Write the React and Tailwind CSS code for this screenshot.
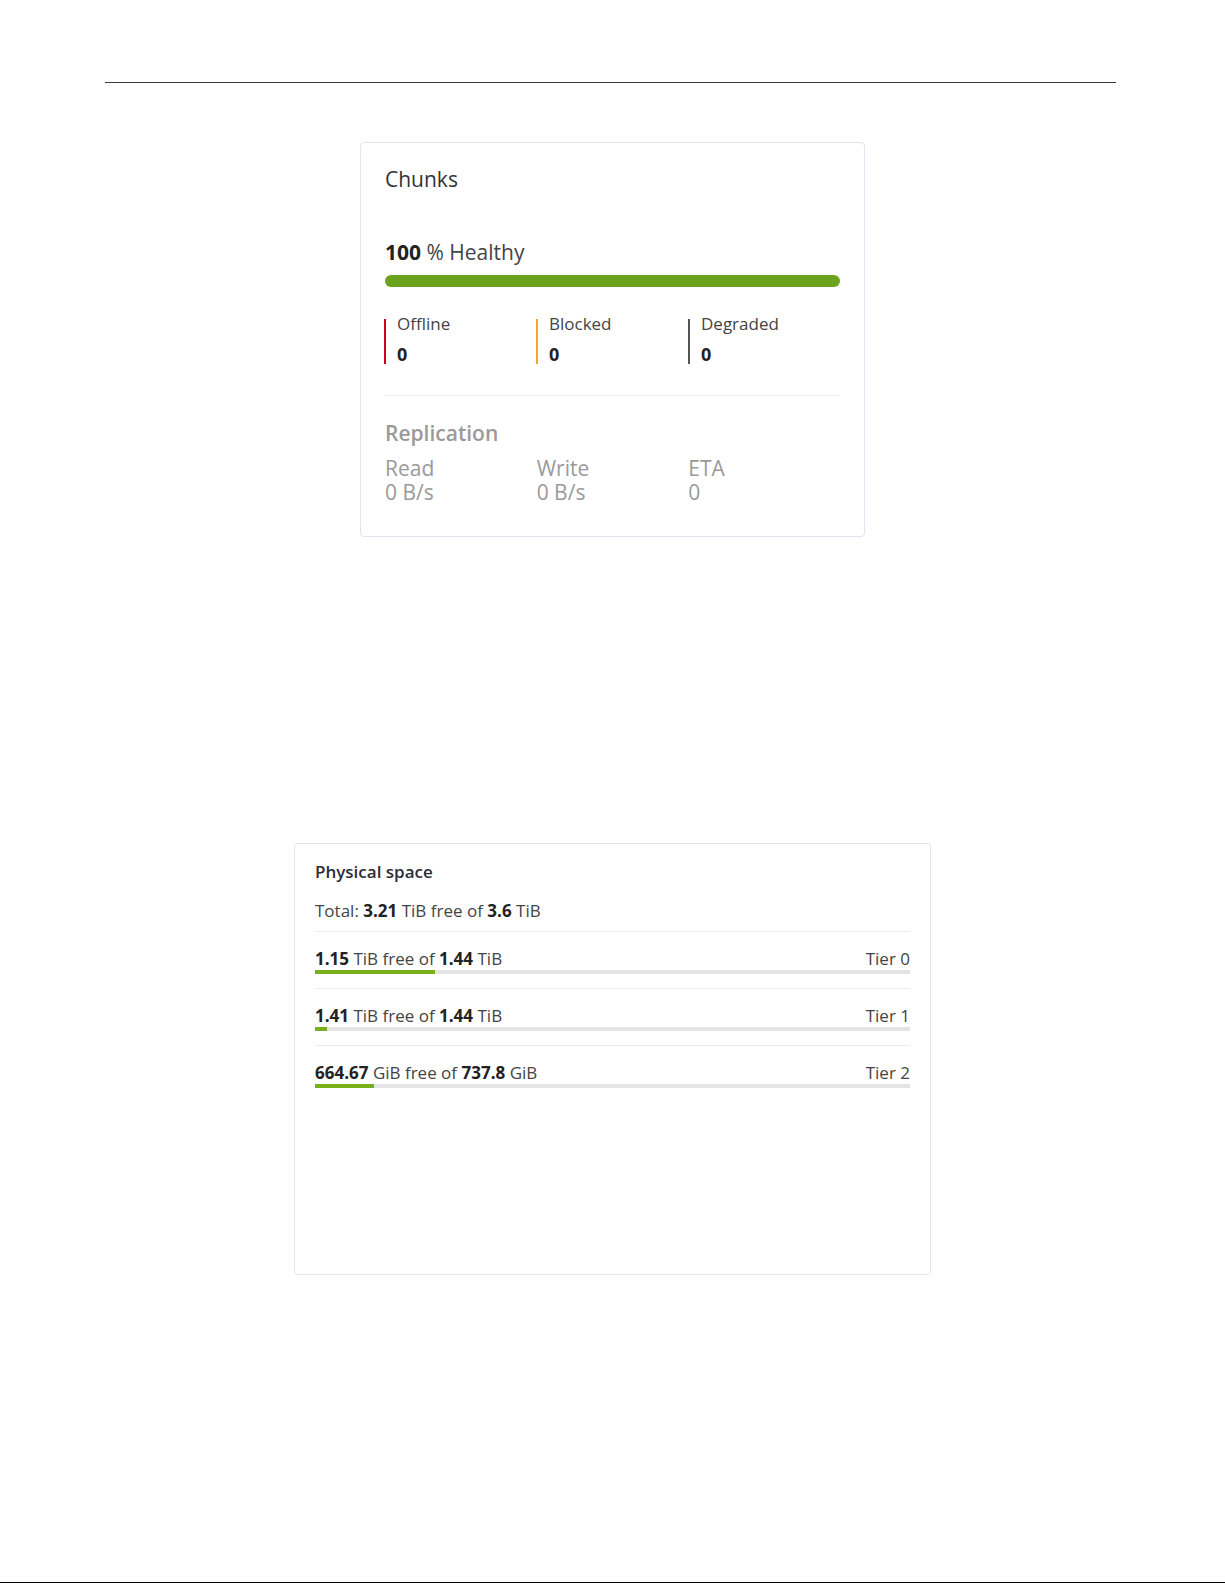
import React from "react";

const font = { fontFamily: '"Open Sans", "Noto Sans", sans-serif' };

function Status({ label, color }) {
  return (
    <div className="flex">
      <div className={`w-[2px] h-[45px] mt-[5px] ${color}`} />
      <div className="ml-[11px]">
        <div className="text-[17px] leading-[20px] text-[#444]">{label}</div>
        <div className="text-[18px] leading-[24px] mt-[8px] font-bold text-[#222]">0</div>
      </div>
    </div>
  );
}

function Rep({ label, value }) {
  return (
    <div className="text-[21px] leading-[24px] text-[#9a9a9a]">
      <div>{label}</div>
      <div>{value}</div>
    </div>
  );
}

function Tier({ free, unit, total, tier, pct, last }) {
  return (
    <div className={`pt-[15px] ${last ? "" : "pb-[14px] border-b border-[#ececec]"}`}>
      <div className="flex justify-between text-[17px] leading-[23px] text-[#444]">
        <div>
          <span className="font-bold text-[#222]">{free}</span> {unit} free of{" "}
          <span className="font-bold text-[#222]">{total}</span> {unit}
        </div>
        <div>{tier}</div>
      </div>
      <div className="h-[4px] bg-[#e4e4e4]">
        <div className="h-full bg-[#78b01a]" style={{ width: `${pct}%` }} />
      </div>
    </div>
  );
}

export default function App() {
  return (
    <div className="w-[1225px] h-[1585px] bg-white overflow-hidden" style={font}>
      <div className="pt-[82px]">
        <div className="ml-[105px] w-[1011px] h-[1px] bg-[#3a3a3a]" />
      </div>

      <div className="mt-[59px] mx-auto w-[505px] h-[395px] border border-[#dde5ee] rounded-[4px] px-[24px] pt-[22px]">
        <div className="text-[21px] leading-[28px] text-[#333]">Chunks</div>
        <div className="mt-[45px] text-[21px] leading-[28px] text-[#444]">
          <span className="font-bold text-[#222]">100</span> % Healthy
        </div>
        <div className="mt-[9px] h-[12px] rounded-full bg-[#6ba31f]" />
        <div className="mt-[27px] grid grid-cols-3 h-[52px] -ml-[1px]">
          <Status label="Offline" color="bg-[#d0021b]" />
          <Status label="Blocked" color="bg-[#f5a623]" />
          <Status label="Degraded" color="bg-[#555555]" />
        </div>
        <div className="mt-[29px] h-[1px] bg-[#e6edf3]" />
        <div className="mt-[23px] text-[21px] leading-[28px] font-semibold text-[#9a9a9a]">Replication</div>
        <div className="mt-[9px] grid grid-cols-3">
          <Rep label="Read" value="0 B/s" />
          <Rep label="Write" value="0 B/s" />
          <Rep label="ETA" value="0" />
        </div>
      </div>

      <div className="mt-[306px] mx-auto w-[637px] h-[432px] border border-[#e6e6e6] rounded-[3px] px-[20px] pt-[16px]">
        <div className="text-[17px] leading-[24px] font-semibold text-[#2d2d38]">Physical space</div>
        <div className="mt-[15px] text-[17px] leading-[24px] text-[#444] pb-[8px] border-b border-[#ececec]">
          Total: <span className="font-bold text-[#222]">3.21</span> TiB free of{" "}
          <span className="font-bold text-[#222]">3.6</span> TiB
        </div>
        <Tier free="1.15" unit="TiB" total="1.44" tier="Tier 0" pct={20.1} />
        <Tier free="1.41" unit="TiB" total="1.44" tier="Tier 1" pct={2.1} />
        <Tier free="664.67" unit="GiB" total="737.8" tier="Tier 2" pct={9.9} last />
      </div>

      <div className="mt-[307px] h-[1px] bg-black" />
    </div>
  );
}
